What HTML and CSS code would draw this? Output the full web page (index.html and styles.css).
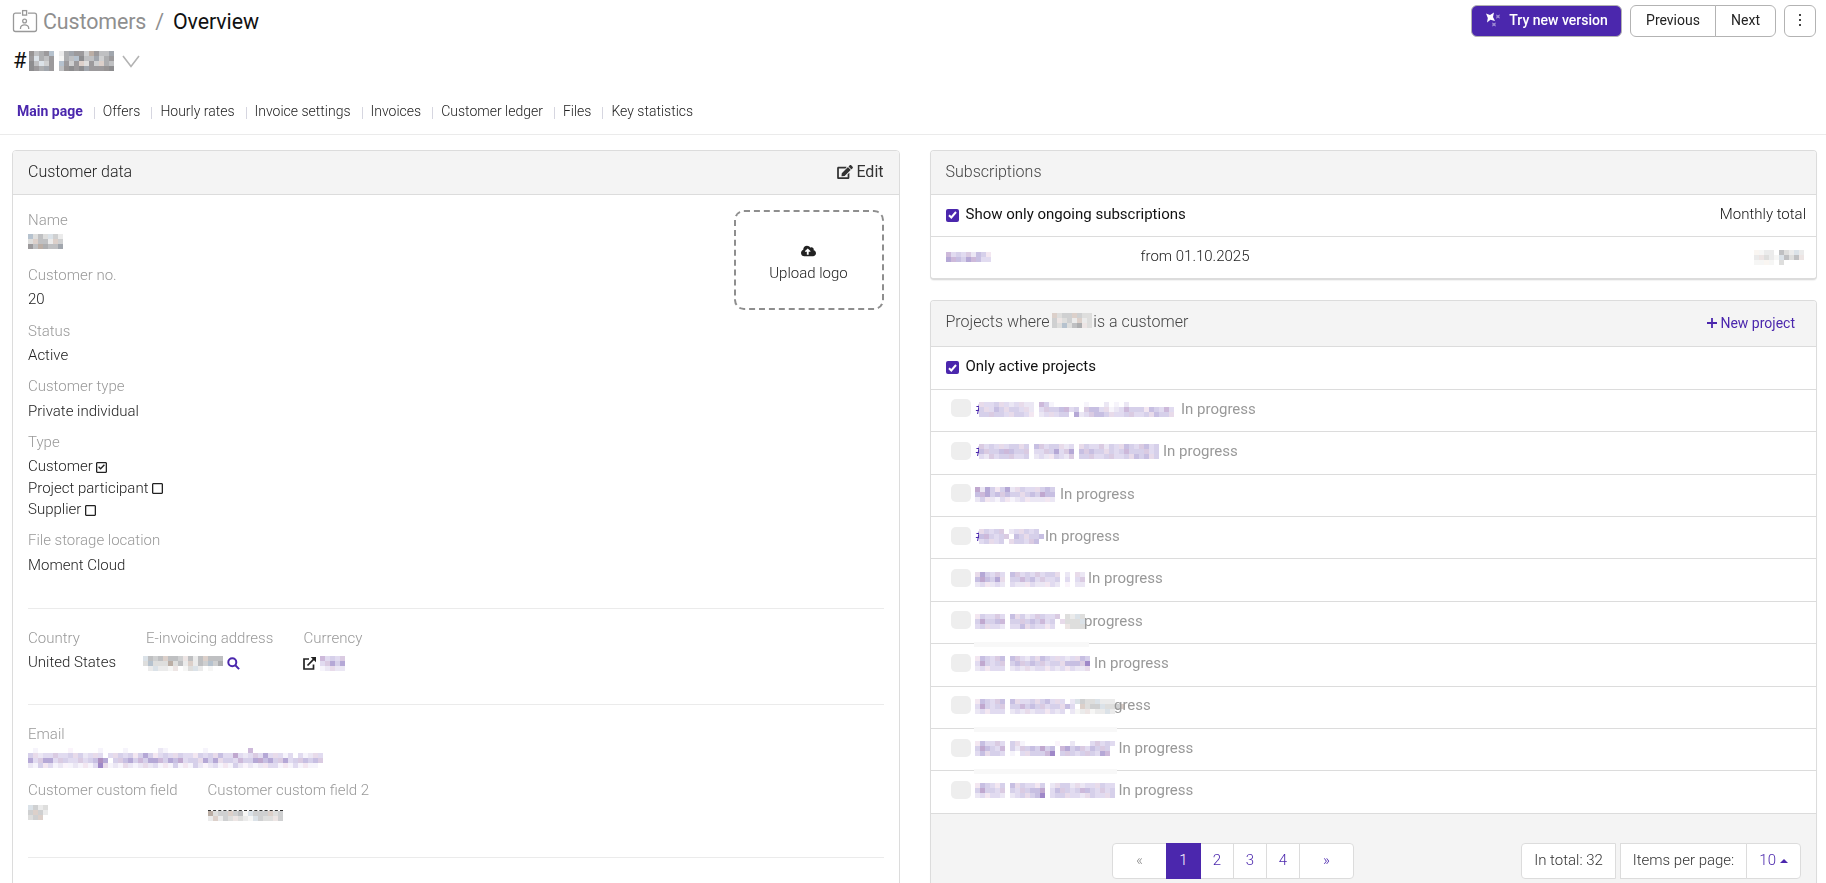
FILE: index.html
```html
<!DOCTYPE html>
<html lang="en">

<head>
    <meta charset="UTF-8">
    <meta name="viewport" content="width=device-width, initial-scale=1.0">
    <title>Customers / Overview</title>
    <link rel="stylesheet" href="styles.css">
</head>

<body>
    <header class="page-header">
        <div class="titles">
            <h1 class="breadcrumb">
                <svg class="badge-icon" width="26" height="24" viewBox="0 0 26 24" fill="none" stroke="#999" stroke-width="1.3">
                    <path d="M9 4.2H3.5A2 2 0 0 0 1.5 6.200v14.300a2 2 0 0 0 2 2h19a2 2 0 0 0 2-2V6.200a2 2 0 0 0-2-2H16" />
                    <rect x="10.600" y="1.600" width="4" height="4.500" />
                    <circle cx="12.600" cy="12" r="1.900" />
                    <path d="M8.500 20v-.800a4.100 3.300 0 0 1 8.200 0v.800" />
                </svg>
                <a href="#">Customers</a><span class="slash">/</span><span>Overview</span>
            </h1>
            <div class="customer-switch">
                <span>#</span><canvas class="mosaic" data-cells="85675.26777467557/73657.16558557467/85347.57474374465/87677.58878777788"></canvas>
                <svg width="18" height="13" viewBox="0 0 18 13" fill="none" stroke="#b3b3b3" stroke-width="1.600"><path d="M1 1l8 10.500L17 1" /></svg>
            </div>
        </div>
        <div class="actions">
            <button class="btn btn-primary">
                <svg width="16" height="16" viewBox="0 0 16 16" fill="#fff">
                    <path d="M1 1.500L5 3l4-2.500L8 5l2 4-4.500-1.200L2 10.500 2.800 6z" />
                    <path opacity=".45" d="M11 2.500l1.800.800 2.200-.800-.800 2 .800 2-2.200-.700-1.800.900.600-2.200zM7 10.500l2 .800 2-.800-.700 2 .700 2-2-.700-2 .700.600-2z" />
                </svg>
                Try new version
            </button>
            <div class="btn-group">
                <button class="btn">Previous</button>
                <button class="btn">Next</button>
            </div>
            <button class="btn btn-more"><i></i><i></i><i></i></button>
        </div>
    </header>

    <nav class="tabs">
        <a class="active" href="#">Main page</a>
        <a href="#">Offers</a>
        <a href="#">Hourly rates</a>
        <a href="#">Invoice settings</a>
        <a href="#">Invoices</a>
        <a href="#">Customer ledger</a>
        <a href="#">Files</a>
        <a href="#">Key statistics</a>
    </nav>

    <main class="columns">
        <section class="panel customer">
            <div class="panel-heading">
                <span>Customer data</span>
                <a class="edit" href="#">
                    <svg width="16" height="14" viewBox="0 0 576 512" fill="#333"><path d="M402.6 83.200l90.200 90.200c3.800 3.800 3.800 10 0 13.800L274.400 405.600l-92.800 10.300c-12.400 1.400-22.900-9.100-21.500-21.500l10.300-92.800L388.800 83.200c3.800-3.800 10-3.800 13.800 0zm162-22.900l-48.800-48.800c-15.200-15.200-39.900-15.200-55.200 0l-35.400 35.400c-3.800 3.800-3.800 10 0 13.800l90.200 90.200c3.800 3.800 10 3.800 13.800 0l35.400-35.400c15.200-15.300 15.200-40 0-55.200zM384 346.200V448H64V128h229.800c3.200 0 6.200-1.300 8.500-3.500l40-40c7.600-7.600 2.200-20.500-8.500-20.500H48C21.500 64 0 85.500 0 112v352c0 26.500 21.500 48 48 48h352c26.500 0 48-21.500 48-48V306.200c0-10.700-12.900-16-20.500-8.500l-40 40c-2.200 2.300-3.500 5.300-3.500 8.500z" /></svg>
                    Edit
                </a>
            </div>
            <div class="panel-body">
                <div class="block main-block">
                    <div>
                        <div class="field">
                            <label>Name</label>
                            <p><canvas class="mosaic" data-cells="5353342/3455244/7566557"></canvas></p>
                        </div>
                        <div class="field"><label>Customer no.</label><p>20</p></div>
                        <div class="field"><label>Status</label><p>Active</p></div>
                        <div class="field"><label>Customer type</label><p>Private individual</p></div>
                        <div class="field">
                            <label>Type</label>
                            <p>Customer <span class="box"><svg width="7" height="6" viewBox="0 0 7 6" fill="none" stroke="#222" stroke-width="1.400"><path d="M.6 2.800l2 2L6.400.8" /></svg></span></p>
                            <p>Project participant <span class="box"></span></p>
                            <p>Supplier <span class="box"></span></p>
                        </div>
                        <div class="field"><label>File storage location</label><p>Moment Cloud</p></div>
                    </div>
                    <div class="upload">
                        <svg width="15" height="12" viewBox="0 0 640 512" fill="#222"><path d="M537.6 226.600c4.100-10.700 6.400-22.400 6.400-34.600 0-53-43-96-96-96-19.700 0-38.100 6-53.300 16.200C367 64.200 315.300 32 256 32c-88.400 0-160 71.600-160 160 0 2.700.1 5.400.2 8.100C40.200 219.800 0 273.200 0 336c0 79.500 64.500 144 144 144h368c70.700 0 128-57.300 128-128 0-61.900-44-113.600-102.400-125.400zM393.400 288H328v112c0 8.800-7.200 16-16 16h-48c-8.800 0-16-7.200-16-16V288h-65.400c-14.300 0-21.400-17.200-11.300-27.300l105.400-105.400c6.200-6.200 16.400-6.200 22.600 0l105.400 105.400c10.100 10.100 2.900 27.300-11.300 27.300z" /></svg>
                        <span>Upload logo</span>
                    </div>
                </div>
                <div class="block invoice-block">
                    <div class="field country"><label>Country</label><p>United States</p></div>
                    <div class="field einvoice">
                        <label>E-invoicing address</label>
                        <p>
                            <canvas class="mosaic" data-cells="3545455425254555/3533363524254546/.232212.1332.1.."></canvas>
                            <svg width="13" height="13" viewBox="0 0 13 13" fill="none" stroke="#4b27ad" stroke-width="2"><circle cx="5.300" cy="5.300" r="4" /><path d="M8.300 8.300l3.800 3.800" /></svg>
                        </p>
                    </div>
                    <div class="field currency">
                        <label>Currency</label>
                        <p>
                            <svg width="13" height="13" viewBox="0 0 13 13" fill="none" stroke="#222" stroke-width="1.700"><path d="M6 2H1v10h9.500V7.500M4.500 8.500l6.500-6.700" /><path d="M7.700 0H13v5.300z" fill="#222" stroke="none" /></svg>
                            <canvas class="mosaic" data-tone="purple" data-cells="53434/34646/12322"></canvas>
                        </p>
                    </div>
                </div>
                <div class="block contact-block">
                    <div class="field">
                        <label>Email</label>
                        <p><canvas class="mosaic email-cells" data-tone="purple" data-cells=".1......1.....1....1......21.......1........5............./432334334342333.3343424642343343324343533632343633313.31233/6346634433434576.445645466546563443646344354466564463445454/2142312112121373121321232312141214212312142121223312131211"></canvas></p>
                    </div>
                    <div class="custom-fields">
                        <div class="field"><label>Customer custom field</label><p><canvas class="mosaic" data-cells="3423/4442/344."></canvas></p></div>
                        <div class="field"><label>Customer custom field 2</label><p><canvas class="mosaic date-cells" data-cells="634444513444434/242432321343324"></canvas></p></div>
                    </div>
                </div>
            </div>
        </section>

        <div class="side">
            <section class="panel">
                <div class="panel-heading light">Subscriptions</div>
                <div class="row filter">
                    <span class="check"><svg width="9" height="8" viewBox="0 0 9 8" fill="none" stroke="#fff" stroke-width="2"><path d="M1 4.200l2.300 2.300L8 1" /></svg></span>
                    Show only ongoing subscriptions
                    <span class="monthly">Monthly total</span>
                </div>
                <div class="row subscription">
                    <canvas class="mosaic" data-tone="purple" data-cells="534342542/655465533"></canvas>
                    <span class="from">from 01.10.2025</span>
                    <canvas class="mosaic amount" data-cells="1122.53232/2232135352/1111.3...."></canvas>
                </div>
            </section>

            <section class="panel projects">
                <div class="panel-heading light">
                    <span class="where">Projects where <canvas class="mosaic" data-cells="43444433/42342423/43535623"></canvas> is a customer</span>
                    <a class="new-project" href="#">
                        <svg width="10" height="10" viewBox="0 0 10 10" stroke="#4b27ad" stroke-width="1.800"><path d="M0 5h10M5 0v10" /></svg>
                        New project
                    </a>
                </div>
                <div class="row filter">
                    <span class="check"><svg width="9" height="8" viewBox="0 0 9 8" fill="none" stroke="#fff" stroke-width="2"><path d="M1 4.200l2.300 2.300L8 1" /></svg></span>
                    Only active projects
                </div>
                <div id="project-list"></div>
                <div class="panel-footer">
                    <div class="pager">
                        <a class="wide muted" href="#">«</a>
                        <a class="current" href="#">1</a>
                        <a href="#">2</a>
                        <a href="#">3</a>
                        <a href="#">4</a>
                        <a class="wide" href="#">»</a>
                    </div>
                    <div class="totals">
                        <span class="total">In total: 32</span>
                        <span class="per-page">Items per page:</span>
                        <a class="size" href="#">10 <i class="caret"></i></a>
                    </div>
                </div>
            </section>
        </div>
    </main>

    <script src="script.js"></script>
</body>

</html>
```
FILE: styles.css
```css
/* Global Styles */
* {
    box-sizing: border-box;
}

body {
    margin: 0;
    height: 883px;
    overflow: hidden;
    font-family: Roboto, "Liberation Sans", sans-serif;
    font-size: 15px;
    font-weight: 300;
    line-height: 21.43px;
    color: #222;
    background-color: white;
}

a {
    color: inherit;
    text-decoration: none;
}

p {
    margin: 0;
}

svg,
canvas {
    flex: none;
}

/* Page header */
.page-header {
    display: flex;
    justify-content: space-between;
    height: 92px;
    padding: 5px 10px 0 12px;
}

.breadcrumb {
    display: flex;
    align-items: center;
    height: 33px;
    margin: 0;
    font-size: 21.4px;
    font-weight: 400;
    letter-spacing: -.1px;
    color: #111;
}

.badge-icon {
    margin-top: -2px;
}

.breadcrumb a {
    margin-left: 5px;
    color: #8f8f8f;
}

.breadcrumb .slash {
    margin: 0 9px;
    color: #8f8f8f;
}

.customer-switch {
    display: flex;
    align-items: center;
    height: 46px;
    padding-left: 1px;
    font-size: 22px;
    font-weight: 400;
    color: #111;
}

.customer-switch .mosaic {
    margin: 0 8px 0 2px;
}

.actions {
    display: flex;
    align-items: flex-start;
    gap: 8px;
}

.btn {
    display: flex;
    align-items: center;
    justify-content: center;
    height: 32px;
    padding: 0 16px 2px;
    border: 1px solid #b3b3b3;
    border-radius: 6px;
    background: white;
    font: 400 14px Roboto, sans-serif;
    color: #222;
}

.btn-primary {
    gap: 8px;
    width: 151px;
    background: #4b27ad;
    font-weight: 500;
    color: white;
    white-space: nowrap;
}

.btn-group {
    display: flex;
}

.btn-group .btn:first-child {
    width: 86px;
    border-radius: 6px 0 0 6px;
}

.btn-group .btn:last-child {
    width: 61px;
    margin-left: -1px;
    border-radius: 0 6px 6px 0;
}

.btn-more {
    flex-direction: column;
    gap: 3px;
    width: 32px;
    padding: 0 0 3px;
}

.btn-more i {
    width: 2px;
    height: 2px;
    background: #444;
}

/* Tabs */
.tabs {
    display: flex;
    align-items: flex-start;
    height: 43px;
    padding: 9px 0 0 17px;
    border-bottom: 1px solid #ebebeb;
    font-size: 14px;
    line-height: 21px;
}

.tabs a + a {
    display: flex;
    align-items: center;
}

.tabs a + a::before {
    content: "";
    width: 1px;
    height: 12px;
    margin: 2px 8px 0 11px;
    background: #d6d6e0;
}

.tabs .active {
    font-weight: 700;
    color: #4b27ad;
}

/* Panels */
.columns {
    display: flex;
    gap: 30px;
    padding: 15px 9px 0 12px;
}

.panel {
    border: 1px solid #dcdcdc;
    border-radius: 4px;
    background: white;
}

.customer {
    width: 888px;
    height: 760px;
}

.side {
    width: 887px;
}

.side .panel {
    margin-bottom: 20px;
    border-bottom-width: 2px;
    box-shadow: 0 1px 1px rgba(0, 0, 0, .05);
}

.panel-heading {
    display: flex;
    align-items: center;
    justify-content: space-between;
    height: 44px;
    padding: 0 15.5px 2px 15px;
    border-bottom: 1px solid #dcdcdc;
    border-radius: 3px 3px 0 0;
    background: #f4f4f4;
    font-size: 16px;
    color: #222;
}

.panel-heading.light {
    padding-left: 14.5px;
    color: #444;
}

.edit {
    display: flex;
    align-items: center;
    gap: 3px;
    font-weight: 400;
    color: #333;
}

.panel-body {
    padding: 0 15px;
}

/* Fields */
.block {
    border-bottom: 1px solid #ebebeb;
}

.main-block {
    display: flex;
    justify-content: space-between;
    height: 414px;
    padding-top: 14.5px;
}

.field {
    margin-bottom: 9.7px;
}

.field label {
    display: block;
    margin-bottom: 3px;
    color: #999;
}

.field p {
    height: 21.43px;
    white-space: nowrap;
}

.box {
    display: inline-flex;
    align-items: center;
    justify-content: center;
    width: 11px;
    height: 11px;
    border: 1.5px solid #222;
    border-radius: 1px;
    box-shadow: inset 0 0 0 .3px #222;
    vertical-align: middle;
}

.upload {
    display: flex;
    flex-direction: column;
    align-items: center;
    width: 150px;
    height: 100px;
    margin-top: .5px;
    padding: 33px 1px 0 0;
    border: 2px dashed #8e8e8e;
    border-radius: 10px;
    font-weight: 300;
}

.upload span {
    margin-top: 6px;
}

.invoice-block {
    display: flex;
    height: 96px;
    padding-top: 19px;
}

.country {
    width: 118px;
}

.einvoice {
    width: 157.5px;
}

.einvoice p,
.currency p {
    display: flex;
    align-items: center;
    gap: 4px;
}

.currency p {
    margin-left: -1px;
}

.einvoice .mosaic {
    margin-left: -3px;
}

.contact-block {
    height: 153px;
    padding-top: 19px;
}

.contact-block .field {
    margin-bottom: 10.3px;
}

.custom-fields {
    display: flex;
    gap: 30px;
}

/* Obscured values */
.mosaic {
    display: inline-block;
    vertical-align: middle;
}

.field .mosaic {
    vertical-align: baseline;
}

.field .email-cells {
    vertical-align: -4px;
}

.field .date-cells {
    border-top: 1px dashed #333;
    vertical-align: -1px;
}

/* Rows */
.row {
    position: relative;
    display: flex;
    align-items: center;
    height: 42.4px;
    padding: 0 10px 2px 15px;
    border-bottom: 1px solid #dcdcdc;
}

.row.subscription {
    height: 41px;
    border-bottom: 0;
    color: #222;
}

.filter {
    font-weight: 400;
    color: #111;
}

.check {
    display: flex;
    align-items: center;
    justify-content: center;
    width: 13px;
    height: 13px;
    margin: 1px 6.5px 0 0;
    border-radius: 2px;
    background: #4b27ad;
}

.monthly {
    margin-left: auto;
    font-weight: 300;
}

.from {
    margin-left: 149.5px;
}

.subscription .amount {
    margin: 2px 2px 0 auto;
}

.projects .panel-heading {
    height: 46px;
    padding: 0 21px 5px 14.5px;
}

.where .mosaic {
    margin: -3px -3px 0 -1px;
}

.new-project {
    display: flex;
    align-items: center;
    gap: 3px;
    padding-top: 4px;
    font-size: 14px;
    font-weight: 400;
    color: #4b27ad;
}

.project {
    padding-left: 20px;
    font-weight: 400;
    color: #999;
}

.project .thumb {
    width: 20px;
    height: 18px;
    margin: -2px 4px 0 0;
    border-radius: 5px;
    background: #eee;
}

.project .name {
    display: flex;
    align-items: center;
    flex: none;
    color: #4b27ad;
}

/* only the left edge of the # shows beside the cells */
.project .hash {
    flex: none;
    width: 9px;
    margin-right: -5px;
}

.project .hash + .mosaic {
    position: relative;
}

.project .smudge {
    position: absolute;
    left: 43px;
    bottom: -4px;
    height: 5px;
    background: #f8f8f8;
    z-index: 1;
}

/* Footer */
.panel-footer {
    display: flex;
    height: 90px;
    padding: 29.5px 15px 0 181px;
    background: #f4f4f4;
    color: #333;
}

.pager,
.totals {
    display: flex;
    height: 36px;
    line-height: 32px;
    text-align: center;
}

.totals {
    margin-left: auto;
}

.pager a,
.totals > * {
    border: 1px solid #dcdcdc;
    background: white;
}

.pager a {
    width: 34px;
    margin-right: -1px;
    color: #4b27ad;
}

.pager .wide {
    width: 55px;
    border-radius: 4px 0 0 4px;
}

.pager .wide:last-child {
    border-radius: 0 4px 4px 0;
}

.pager .muted {
    color: #888;
}

.pager .current {
    width: 35px;
    border-color: #4b27ad;
    background: #4b27ad;
    color: white;
    z-index: 1;
}

.totals .total {
    width: 95px;
    margin-right: 4px;
    border-radius: 4px 0 0 4px;
}

.totals .per-page {
    width: 127px;
}

.totals .size {
    width: 55px;
    margin-left: -1px;
    border-radius: 0 4px 4px 0;
    color: #4b27ad;
}

.caret {
    display: inline-block;
    border: 4px solid transparent;
    border-top: 0;
    border-bottom-color: #4b27ad;
    vertical-align: 2px;
}
```
FILE: script.js
```js
const CELL = 5;

const projects = [
    { hash: true, width: 206, status: 'In progress', cells: '33343323322.541......1...2.1.2........0/43354344332.34445534.455331235444254353/44444334432.233344.62345543334433435443' },
    { hash: true, width: 188, status: 'In progress', cells: '4343334434.54344323.3433424335434534/5444555444.33446346.5454434345444434/3243444334.23224324.4443344334354534' },
    { width: 85, status: 'In progress', cells: '6264246234333454/5564545443454655/2422132123222222' },
    { hash: true, width: 70, status: 'In progress', cells: '343434.233434/554344.543445/343334.344345'.replaceAll('34.', '4.') },
    { width: 113, status: 'In progress', cells: '364343.5434343443.2.32/565463.4454534334.3.34/232232.3222322232.1.22' },
    { width: 109, status: 'progress', smudge: 115, grayFrom: 18, cells: '243343.5342344334.3233/464455.444454534.33333/343332.335343323..2333' },
    { width: 119, status: 'In progress', cells: '254345.5432435433323354/364344.4544544344355547/232333.2323233232323223' },
    { width: 139, status: 'gress', smudge: 143, grayFrom: 20, cells: '254345.53334345333.234333222/364344.4454544344353.434433344/232333.23232332323.212212232' },
    { width: 143.5, status: 'In progress', smudge: 143, cells: '253343.431......1..2...34343/465435.424454645.5645435444/353443.1.3344457.4443444365' },
    { width: 143.5, status: 'In progress', cells: '254324.5343324.2344232333433/464434.4344556.3544345543434/232332.2343457.3443332343334' }
];

const PURPLES = ['#fff', '#f6f4fb', '#ebe7f4', '#e1dbf0', '#d6d0ea', '#c7bfe2', '#b5a8d6', '#9f88c8', '#8f70bd', '#7f60b0'];
const PINKS = ['#fff', '#faf4fb', '#f3e7f1', '#e8dbea', '#dacbe2', '#cdb9da', '#c0a8cf', '#ad8fc0', '#9f80b8', '#8f70b0'];
const GRAYS = ['#fff', '#f6f6f5', '#ebebeb', '#dededd', '#cfd0d1', '#bfc0c2', '#adaeb0', '#9c9a9c', '#8d8d8f', '#777'];
const TINTS = ['#fff', '#faf6f2', '#ede5e4', '#dbe2e8', '#dcd0ca', '#b6c2ce', '#bbaea5', '#a1a6ad', '#979494', '#777'];

const drawMosaic = (canvas) => {
    const rows = canvas.dataset.cells.split('/').filter(Boolean);
    const grayFrom = Number(canvas.dataset.grayFrom || 999);
    canvas.width = Math.max(...rows.map(row => row.length)) * CELL;
    canvas.height = rows.length * CELL;
    const ctx = canvas.getContext('2d');
    ctx.fillStyle = canvas.closest('.panel-heading') ? '#f4f4f4' : '#fff';
    ctx.fillRect(0, 0, canvas.width, canvas.height);
    rows.forEach((row, y) => {
        [...row].forEach((level, x) => {
            if (level === '.') return;
            const odd = (x * 7 + y * 5) % 4 === 0;
            const purple = canvas.dataset.tone === 'purple' && x < grayFrom;
            const colors = purple ? (odd ? PINKS : PURPLES) : (odd ? TINTS : GRAYS);
            ctx.fillStyle = colors[level];
            ctx.fillRect(x * CELL, y * CELL, CELL, CELL);
        });
    });
};

const list = document.getElementById('project-list');
projects.forEach(project => {
    const row = document.createElement('div');
    row.classList.add('row', 'project');
    row.innerHTML = `
        <span class="thumb"></span>
        <a class="name" href="#" style="width: ${project.width}px">
            ${project.hash ? '<span class="hash">#</span>' : ''}
            <canvas class="mosaic" data-tone="purple" data-cells="${project.cells}" data-gray-from="${project.grayFrom || ''}"></canvas>
        </a>
        <span>${project.status}</span>
        ${project.smudge ? `<i class="smudge" style="width: ${project.smudge}px"></i>` : ''}`;
    list.appendChild(row);
});

document.querySelectorAll('.mosaic').forEach(drawMosaic);
```
